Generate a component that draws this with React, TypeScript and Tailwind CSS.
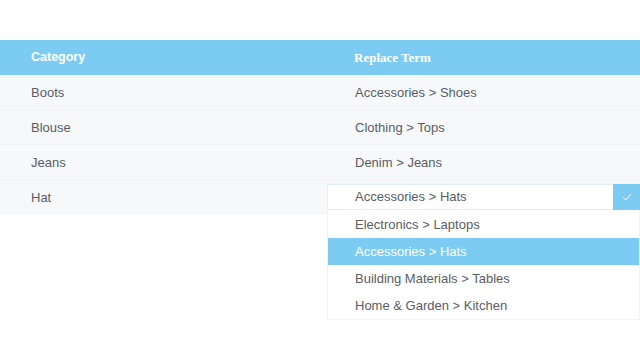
import { useState } from 'react';

const rows = [
  { category: 'Boots', term: 'Accessories > Shoes' },
  { category: 'Blouse', term: 'Clothing > Tops' },
  { category: 'Jeans', term: 'Denim > Jeans' },
];

const options = [
  'Electronics > Laptops',
  'Accessories > Hats',
  'Building Materials > Tables',
  'Home & Garden > Kitchen',
];

export default function App() {
  const [selected] = useState('Accessories > Hats');

  return (
    <div className="w-[640px] h-[360px] bg-white pt-10 font-['Liberation_Sans',Arial,sans-serif] text-[13px] text-[#595d65]">
      <div className="flex h-[35px] items-center bg-[#7ccbf2] text-white text-[12.5px] font-semibold">
        <div className="w-[323px] pl-[31px]">Category</div>
        <div className="flex-1 pl-[31px] font-['Liberation_Serif',serif] text-[13px] font-bold">Replace Term</div>
      </div>
      {rows.map((r) => (
        <div key={r.category} className="flex h-[35px] items-center pt-[1px] bg-[#f7f8fa] border-b border-[#f1f3f6]">
          <div className="w-[323px] pl-[31px]">{r.category}</div>
          <div className="flex-1 pl-[32px]">{r.term}</div>
        </div>
      ))}
      <div className="flex h-[35px] bg-[#f7f8fa]">
        <div className="w-[323px] pl-[31px] pt-[1px] flex items-center">Hat</div>
        <div className="relative flex-1 pl-[4px] pt-[4px]">
          <div className="flex h-[26px] border border-[#dfeef7] bg-white">
            <div className="flex-1 pl-[27px] flex items-center">{selected}</div>
            <div className="w-[27px] -my-px -mr-px bg-[#7ccbf2] flex items-center justify-center">
              <svg width="10" height="8" viewBox="0 0 10 8" fill="none">
                <path d="M1 4.2 L3.8 6.8 L9 1.2" stroke="white" strokeWidth="1" />
              </svg>
            </div>
          </div>
          <div className="absolute left-[4px] right-0 top-[30px] z-10 bg-white border border-t-0 border-[#f1f3f6] pt-px">
            {options.map((o) => (
              <div
                key={o}
                className={
                  o === selected
                    ? 'h-[27px] flex items-center pl-[27px] bg-[#7ccbf2] text-white'
                    : 'h-[27px] flex items-center pl-[27px]'
                }
              >
                {o}
              </div>
            ))}
          </div>
        </div>
      </div>
    </div>
  );
}
